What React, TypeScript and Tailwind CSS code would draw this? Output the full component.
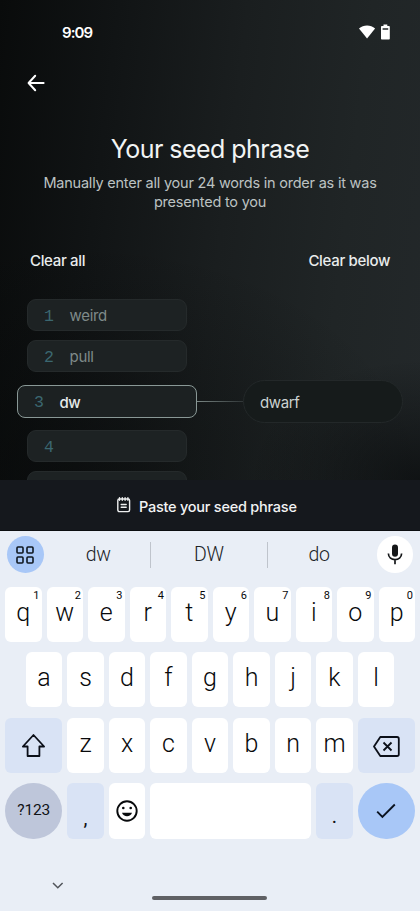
import React from "react";

type KeyProps = { label: string; hint?: string };

function Key({ label, hint }: KeyProps) {
  return (
    <div className="relative flex h-[55px] w-[36.5px] items-center justify-center rounded-[6px] bg-white text-[25px] leading-none font-light text-[#08090b]">
      <span className="-translate-y-[2px]">{label}</span>
      {hint && (
        <span className="absolute top-[3px] right-[2px] text-[11px] leading-none font-normal">{hint}</span>
      )}
    </div>
  );
}

function WordRow({ n, word }: { n?: number; word?: string }) {
  return (
    <div className="ml-[27px] flex h-8 w-40 shrink-0 items-center rounded-[9px] border border-[#252a2b] bg-[#1d2223]">
      <span className="ml-4 w-[25.5px] pt-[4px] font-['Liberation_Mono',monospace] text-[16.5px] text-[#3b6770]">{n}</span>
      <span className="pt-[3px] text-[15px] tracking-[-0.3px] text-[#7f8a89]">{word}</span>
    </div>
  );
}

export default function App() {
  const top = ["q", "w", "e", "r", "t", "y", "u", "i", "o", "p"];
  return (
    <div className="flex h-[911px] w-[420px] flex-col overflow-hidden bg-[#0d0f10] font-['Inter',sans-serif]">
      <main className="flex h-[480px] shrink-0 flex-col overflow-hidden bg-[radial-gradient(ellipse_170px_120px_at_100%_100%,rgba(5,7,8,0.65),transparent),radial-gradient(ellipse_360px_240px_at_15%_100%,rgba(5,7,7,0.5),transparent),linear-gradient(97deg,#090b0b_0%,#111415_25%,#1a1e1f_52%,#202526_78%,#23282a_100%)]">
        <header className="flex h-[64px] shrink-0 items-center justify-between pr-[29px] pl-[62px]">
          <span className="text-[15px] leading-none font-semibold tracking-[-0.95px] text-white">9:09</span>
          <svg width="32" height="16" viewBox="0 0 32 16" fill="#fff">
            <path d="M0 4.6C4.4.4 11.7.4 16.1 4.6L8.05 14.6Z" />
            <path fillRule="evenodd" d="M24.5.5h3.8v1.5H30q.8 0 .8.8V14.7q0 .8-.8.8h-7.2q-.8 0-.8-.8V2.8q0-.8.8-.8h1.7ZM23.6 4.3v1.5h5.6V4.3Z" />
          </svg>
        </header>
        <svg className="mt-[10px] ml-[27px] shrink-0" width="18" height="18" viewBox="0 0 18 18" fill="none" stroke="#fff" strokeWidth="2" strokeLinecap="round" strokeLinejoin="round">
          <path d="M8.2 1.8 1.6 9l6.6 7.2M1.8 9h14.8" />
        </svg>
        <h1 className="mt-[41px] text-center text-[25px] leading-8 tracking-[-0.55px] text-[#f2f4f4]">Your seed phrase</h1>
        <p className="mt-[7.5px] text-center text-[14.5px] leading-[19px] tracking-[-0.22px] text-[#bcc2c2]">
          Manually enter all your 24 words in order as it was
          <br />
          presented to you
        </p>
        <div className="mt-[39px] flex justify-between pr-[30px] pl-[30px] text-[15px] leading-[22px] font-medium tracking-[-0.33px] text-[#e9ecec]">
          <span>Clear all</span>
          <span>Clear below</span>
        </div>
        <section className="mt-[27.5px] flex flex-col">
          <WordRow n={1} word="weird" />
          <div className="h-[9px] shrink-0" />
          <WordRow n={2} word="pull" />
          <div className="mt-[8px] mb-[7px] flex h-[43px] shrink-0 items-center pl-[17px]">
            <div className="flex h-[33px] w-[180px] items-center rounded-[8px] border border-[#899896] bg-[#1c2122]">
              <span className="ml-4 w-[25.5px] pt-[4px] font-['Liberation_Mono',monospace] text-[16.5px] text-[#3b6770]">3</span>
              <span className="pt-[3px] text-[15px] font-medium tracking-[-0.4px] text-[#e5eaea]">dw</span>
            </div>
            <div className="h-[1.5px] w-[46px] bg-linear-to-r from-[#7a8684] to-[#303637]" />
            <div className="flex h-[43px] w-40 items-center rounded-full border border-[#232829] bg-[#161b1b] pt-[3px] pl-4 text-[15px] tracking-[-0.4px] text-[#cbd2d1]">dwarf</div>
          </div>
          <WordRow n={4} />
          <div className="h-[9px] shrink-0" />
          <WordRow />
        </section>
      </main>

      <div className="flex h-[51px] shrink-0 items-center border-b border-[#0b0d10] bg-[#15181d] pl-[117px] text-[14.5px] tracking-[-0.24px] text-[#f2f3f4]">
        <svg width="14" height="16" viewBox="0 0 14 16" fill="none" stroke="#eeeff0" strokeWidth="1.4" strokeLinecap="round">
          <rect x=".8" y="2" width="11.8" height="12.6" rx="1.5" />
          <path d="M2.5.7v2.5M5.3.7v2.5M8.1.7v2.5M10.9.7v2.5M4.2 7.5h5M4.2 10.2h5" />
        </svg>
        <span className="ml-2 pt-[3px] font-medium">Paste your seed phrase</span>
      </div>

      <div className="flex flex-1 flex-col bg-[#e9eef6] px-[5px] font-['Roboto',sans-serif] text-[#111316]">
        <div className="flex h-[55.5px] shrink-0 items-start px-[2px] pt-[5px]">
          <div className="flex h-[37px] w-[36.5px] items-center justify-center rounded-full bg-[#a8c7f7]">
            <svg width="18" height="18" viewBox="0 0 18 18" fill="none" stroke="#101820" strokeWidth="1.6">
              <rect x="1" y="1" width="6" height="6" rx="1" />
              <rect x="11" y="1" width="6" height="6" rx="1" />
              <rect x="1" y="11" width="6" height="6" rx="1" />
              <rect x="11" y="11" width="6" height="6" rx="1" />
            </svg>
          </div>
          <div className="flex h-[37px] flex-1 items-center text-[19.5px] font-light tracking-[-0.3px] text-[#202327]">
            <span className="w-[106.5px] pl-[3px] text-center">dw</span>
            <i className="h-[26px] w-px bg-[#bfc4cc]" />
            <span className="w-[115.5px] text-center">DW</span>
            <i className="h-[26px] w-px bg-[#bfc4cc]" />
            <span className="w-[103px] text-center">do</span>
          </div>
          <div className="flex h-[37px] w-[36.5px] items-center justify-center rounded-full bg-white">
            <svg width="16" height="21" viewBox="0 0 16 21" fill="none" stroke="#151719" strokeWidth="1.7">
              <rect x="5" y=".4" width="6" height="12.4" rx="3" fill="#151719" stroke="none" />
              <path d="M1.4 9.6c0 8 13.2 8 13.2 0M8 15.8v4.4" />
            </svg>
          </div>
        </div>

        <div className="flex flex-col gap-[10.5px]">
          <div className="flex gap-[5px]">
            {top.map((k, i) => (
              <Key key={k} label={k} hint={String((i + 1) % 10)} />
            ))}
          </div>
          <div className="flex justify-center gap-[5px]">
            {["a", "s", "d", "f", "g", "h", "j", "k", "l"].map((k) => (
              <Key key={k} label={k} />
            ))}
          </div>
          <div className="flex gap-[5px]">
            <div className="flex h-[55px] w-[57.25px] items-center justify-center rounded-[6px] bg-[#d9e3f5]">
              <svg width="24" height="23" viewBox="0 0 24 23" fill="none" stroke="#0b0f18" strokeWidth="1.8" strokeLinejoin="round">
                <path d="M11.5 1 .9 12.5h4.7V22h11.8v-9.5H22.1Z" />
              </svg>
            </div>
            {["z", "x", "c", "v", "b", "n", "m"].map((k) => (
              <Key key={k} label={k} />
            ))}
            <div className="flex h-[55px] w-[57.25px] items-center justify-center rounded-[6px] bg-[#d9e3f5]">
              <svg className="mt-[2px]" width="27" height="21" viewBox="0 0 27 21" fill="none" stroke="#0b0f18" strokeWidth="1.8" strokeLinejoin="round">
                <path d="M7.3 1H24q1.8 0 1.8 1.8v15.4q0 1.8-1.8 1.8H7.3L1 10.5ZM10.5 6.5l8 8M18.5 6.5l-8 8" />
              </svg>
            </div>
          </div>
          <div className="flex gap-[5px]">
            <div className="flex h-[55.5px] w-[57.25px] items-center justify-center rounded-full bg-[#bec6da] text-[15.5px] tracking-[-0.2px]">?123</div>
            <div className="flex h-[55.5px] w-[36.5px] items-end justify-center rounded-[6px] bg-[#d9e3f5] pb-[9px] text-[20px] leading-6">,</div>
            <div className="flex h-[55.5px] w-[36.5px] items-center justify-center rounded-[6px] bg-white">
              <svg width="22" height="22" viewBox="0 0 22 22" fill="none" stroke="#080a0c" strokeWidth="1.9">
                <circle cx="11" cy="11" r="9.7" />
                <path d="M6 12.8h10c-1.2 4.6-8.8 4.6-10 0Z" fill="#080a0c" stroke="none" />
                <circle cx="7.3" cy="8" r="1.3" fill="#080a0c" stroke="none" />
                <circle cx="14.7" cy="8" r="1.3" fill="#080a0c" stroke="none" />
              </svg>
            </div>
            <div className="h-[55.5px] flex-1 rounded-[6px] bg-white" />
            <div className="flex h-[55.5px] w-[36.5px] items-end justify-center rounded-[6px] bg-[#d9e3f5] pb-[11px] text-[20px] leading-6">.</div>
            <div className="flex h-[55.5px] w-[57.25px] items-center justify-center rounded-full bg-[#a8c7f7]">
              <svg width="20" height="16" viewBox="0 0 20 16" fill="none" stroke="#0b1320" strokeWidth="1.9">
                <path d="m1.2 8.7 5.2 5.2L18.8 1.5" />
              </svg>
            </div>
          </div>
        </div>

        <div className="mt-[43.5px] flex items-start">
          <svg className="ml-[47px]" width="12" height="8" viewBox="0 0 12 8" fill="none" stroke="#51545a" strokeWidth="1.5">
            <path d="m1 1 4.8 4.8L10.6 1" />
          </svg>
          <div className="mt-[14px] ml-[88px] h-[4px] w-[115px] rounded-full bg-[#5f6064]" />
        </div>
      </div>
    </div>
  );
}
